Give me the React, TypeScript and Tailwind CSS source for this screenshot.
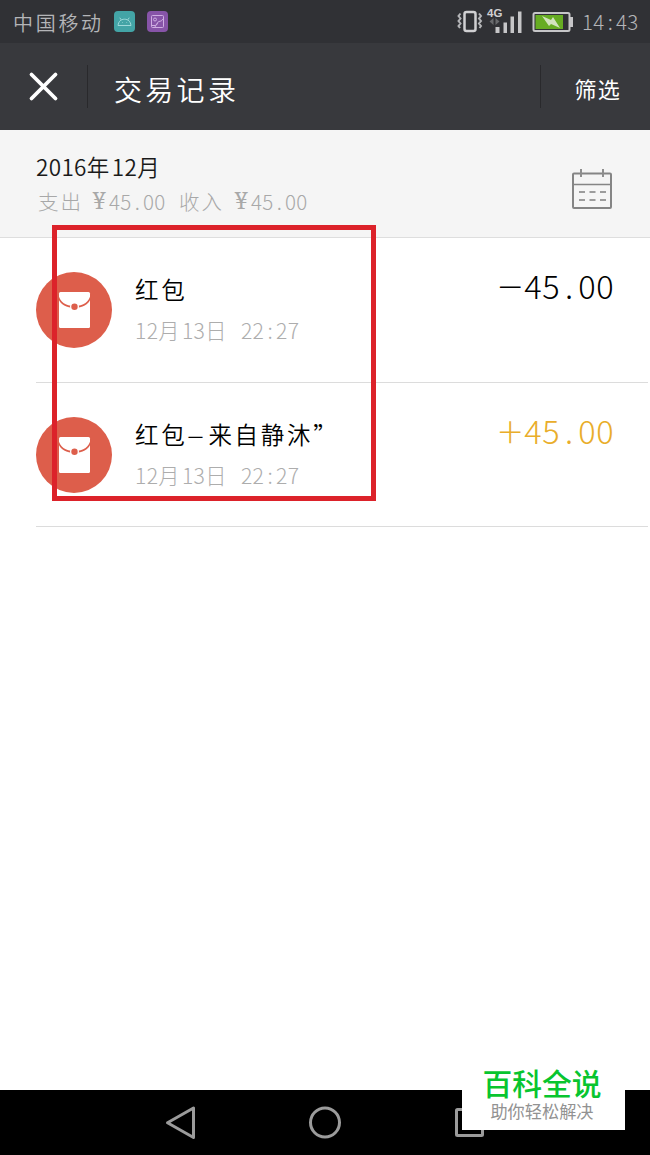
import React from 'react';

interface Transaction {
  id: number;
  title: string;
  time: string;
  amount: string;
  income: boolean;
}

const transactions: Transaction[] = [
  { id: 1, title: '红包', time: '12月13日 22:27', amount: '−45.00', income: false },
  { id: 2, title: '红包–来自静沐”', time: '12月13日 22:27', amount: '+45.00', income: true },
];

// Chinese glyphs take a full cell, digits half of one
const Mixed: React.FC<{ text: string }> = ({ text }) => (
  <>
    {text.split(/([\u4e00-\u9fff]+|[.:–])/).filter(Boolean).map((part, index) => {
      if (/[\u4e00-\u9fff]/.test(part)) {
        return <span key={index} className="tracking-[0.115em]">{part}</span>;
      }
      if (part === '.' || part === ':') {
        return <span key={index} className="inline-block w-[0.56em] text-center">{part}</span>;
      }
      if (part === '–') {
        return <span key={index} className="inline-block w-[21px] origin-left scale-x-[1.35]">{part}</span>;
      }
      return <span key={index} className="tracking-[0.015em] [word-spacing:0.33em]">{part}</span>;
    })}
  </>
);

const StatusBar: React.FC = () => (
  <div className="flex h-[43px] items-center bg-[#303135] pl-[13px] pr-[11px] text-[#b4b5b8]">
    <span className="pt-[2px] text-[20px] font-[350] leading-none tracking-[2.7px]">中国移动</span>
    <svg className="ml-[10px]" width="21" height="21" viewBox="0 0 21 21" fill="none">
      <rect width="21" height="21" rx="4" fill="#43a4a6" />
      <path d="M4 14.500c.4-4 3-6.300 6.500-6.300s6.100 2.300 6.500 6.300zM7 8.700 5.800 6.700M14 8.700l1.200-2M8 11.500h.6M12.500 11.500h.6" stroke="#9ed9da" strokeWidth="1" />
    </svg>
    <svg className="ml-[12px]" width="21" height="21" viewBox="0 0 21 21" fill="none">
      <rect width="21" height="21" rx="4" fill="#8754a8" />
      <g stroke="#cfaee2" strokeWidth="1">
        <rect x="4.500" y="4.500" width="12" height="12" rx="1" />
        <circle cx="8" cy="8.500" r="1.500" />
        <path d="M5 14.500h3c2.500 0 1.500-3.500 4-4 1.500-.3 3-.5 4-2.500M8 16c.5-2 2-2 2.500-4" />
      </g>
    </svg>
    <div className="ml-auto flex items-center">
      <svg className="mb-[10px]" width="66" height="34" viewBox="0 0 66 34" fill="none">
        <rect x="7.500" y="12" width="11" height="19" rx="2" stroke="#d0d0d2" strokeWidth="2.500" />
        <path d="M3.500 13.500l-2 2.500 2 2.500-2 2.500 2 2.500-2 2.500 1.500 2M22 13.500l2 2.500-2 2.500 2 2.500-2 2.500 2 2.500-1.500 2" stroke="#b4b5b8" strokeWidth="2" />
        <text x="30" y="16.500" fill="#d0d0d2" fontSize="11.500" fontWeight="700" fontFamily="Liberation Sans, sans-serif">4G</text>
        <path d="M36.500 18v7l-4-3.500zM38.500 18v7l4-3.500z" fill="#696a6d" />
        <path d="M38.500 27h4v6h-4zM46.500 22.500h3.500V33h-3.500zM53.500 16.500H57V33h-3.500zM61 11.500h3.500V33H61z" fill="#c6c6c8" />
      </svg>
      <svg className="ml-[9px]" width="42" height="22" viewBox="0 0 42 22" fill="none">
        <rect x="1.500" y="2" width="36" height="18" rx="1.500" stroke="#c6c6c8" strokeWidth="2" />
        <path d="M38.500 7H40v8h-1.500z" stroke="#c6c6c8" strokeWidth="2" />
        <path d="M3.500 4H31v14H3.500z" fill="#66ac22" />
        <path d="M10 5l9 4 2-3 7 11-9-4-2 2z" fill="#d2e3be" />
      </svg>
      <span className="ml-[8px] w-[57px] text-[20.500px] font-light leading-none"><Mixed text="14:43" /></span>
    </div>
  </div>
);

const Header: React.FC = () => (
  <header className="flex h-[87px] items-center bg-[#38393d] text-white">
    <svg className="ml-[28px]" width="31" height="31" viewBox="0 0 31 31">
      <path d="M3.500 3.500 27.500 27.500M27.500 3.500 3.500 27.500" stroke="#fff" strokeWidth="3.800" strokeLinecap="round" />
    </svg>
    <div className="ml-[28px] h-[43px] w-[1px] bg-[#29292c]" />
    <h1 className="ml-[26px] pt-[5px] text-[28px] font-[350] leading-none tracking-[3.300px]">交易记录</h1>
    <div className="ml-auto h-[43px] w-[1px] bg-[#29292c]" />
    <button className="ml-[33px] mr-[29px] pt-[3px] text-[22px] leading-none tracking-[1.300px]">筛选</button>
  </header>
);

const MonthSummary: React.FC = () => (
  <section className="flex h-[108px] items-center justify-between border-b border-[#dedede] bg-[#f5f5f5] pl-[36px] pr-[37px]">
    <div>
      <p className="text-[22.500px] font-[350] leading-[35px] text-[#1a1a1a]"><Mixed text="2016年12月" /></p>
      <p className="flex text-[20.500px] font-light leading-[34px] text-[#a8a8a8]">
        <span className="w-[56px] pl-[2px] tracking-[2px]">支出</span>
        <span className="w-[17px] font-serif text-[24px]">¥</span>
        <span className="w-[70px]"><Mixed text="45.00" /></span>
        <span className="w-[55px] tracking-[2px]">收入</span>
        <span className="w-[17px] font-serif text-[24px]">¥</span>
        <span><Mixed text="45.00" /></span>
      </p>
    </div>
    <svg className="mt-[11px]" width="42" height="42" viewBox="0 0 42 42" fill="none">
      <rect x="2" y="5.500" width="38" height="34.500" rx="1" stroke="#858585" strokeWidth="2" />
      <path d="M2 16.500h38" stroke="#858585" strokeWidth="1.500" />
      <path d="M10 1v8M32 1v8" stroke="#8e8e8e" strokeWidth="2" />
      <path d="M8 24h6m4.500 0h6m4.500 0h6M8 32h6m4.500 0h6m4.500 0h6" stroke="#9c9c9c" strokeWidth="2" />
    </svg>
  </section>
);

const RedPacketIcon: React.FC = () => (
  <svg className="mt-[34px] flex-shrink-0" width="76" height="76" viewBox="0 0 76 76">
    <circle cx="38" cy="38" r="38" fill="#dd5e4b" />
    <rect x="23" y="20" width="31" height="36" rx="1.500" fill="#fff" />
    <path d="M22.500 22.500c1 7 7 11.500 16 11.500s15-4.500 16-11.500v4.500c-2 5.500-8 8.800-16 8.800s-14-3.300-16-8.800z" fill="#dd5e4b" />
    <circle cx="38.500" cy="34.800" r="4.500" fill="#fff" />
    <circle cx="38.500" cy="34.800" r="3.200" fill="#dd5e4b" />
  </svg>
);

const TransactionRow: React.FC<{ item: Transaction }> = ({ item }) => (
  <li className="flex h-[144.500px] border-b border-[#dcdcdc]">
    <RedPacketIcon />
    <div className="ml-[23px] mt-[32px]">
      <p className="text-[23.500px] font-[350] leading-[38px] text-black"><Mixed text={item.title} /></p>
      <p className="mt-[3px] text-[21.200px] font-light leading-[38px] text-[#adadad]"><Mixed text={item.time} /></p>
    </div>
    <p className={`ml-auto mr-[34px] mt-[24px] flex text-[32.500px] font-light leading-[46px] ${item.income ? 'text-[#e9ad2a]' : 'text-black'}`}>
      <span className="w-[28px] text-center text-[46px] font-thin leading-[44px]">{item.amount[0]}</span>
      <span><Mixed text={item.amount.slice(1)} /></span>
    </p>
  </li>
);

const NavBar: React.FC = () => (
  <nav className="relative h-[65px] bg-black">
    <svg width="650" height="65" viewBox="0 0 650 65" fill="none" stroke="#9b9b9b" strokeWidth="3">
      <path d="M193.500 18v29.500L167.500 32.700z" strokeLinejoin="round" />
      <circle cx="325" cy="32.500" r="14.500" />
      <rect x="456.500" y="19.500" width="26" height="26" rx="1" />
    </svg>
    <div className="absolute bottom-[25px] left-[462px] flex h-[80px] w-[163px] flex-col items-center bg-white pt-[18px]">
      <span className="mr-[3px] text-[29.800px] font-medium leading-[28px] text-[#08c52f]">百科全说</span>
      <span className="mr-[3px] mt-[6px] text-[17.200px] leading-[18px] text-[#929292]">助你轻松解决</span>
    </div>
  </nav>
);

const App: React.FC = () => {
  return (
    <div className="relative flex h-[1155px] w-[650px] flex-col overflow-hidden bg-white font-['Noto_Sans_CJK_SC',sans-serif]">
      <StatusBar />
      <Header />
      <MonthSummary />
      <ul className="flex-1 pl-[36px] pr-[2px]">
        {transactions.map((item) => (
          <TransactionRow key={item.id} item={item} />
        ))}
      </ul>
      <NavBar />
      {/* Highlight frame */}
      <div className="pointer-events-none absolute left-[52px] top-[225px] h-[276px] w-[324px] border-[5px] border-[#dc222a]" />
    </div>
  );
};

export default App;
